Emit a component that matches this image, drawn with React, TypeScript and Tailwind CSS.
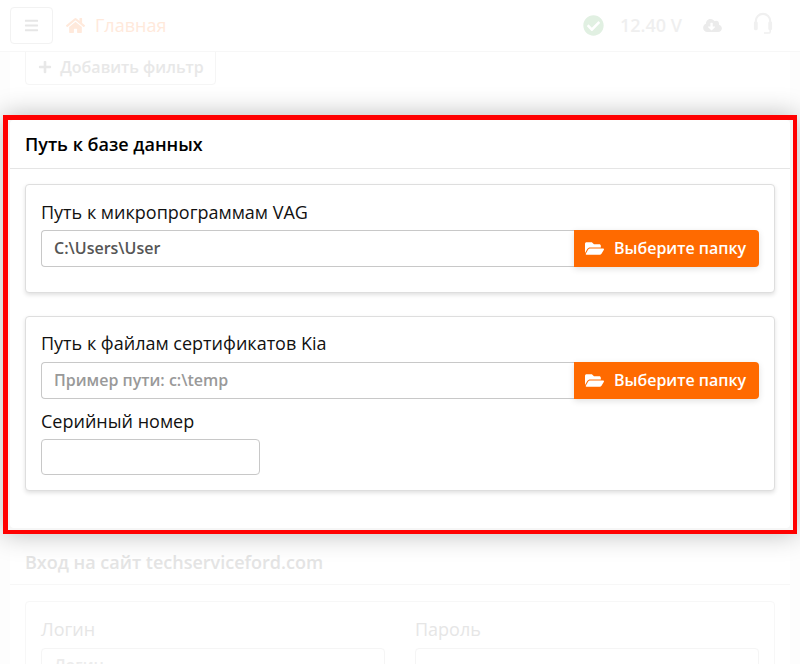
import { FaBars, FaHome, FaPlus, FaCheckCircle, FaCloudDownloadAlt, FaFolderOpen } from "react-icons/fa";

function PathRow({ value, placeholder }: { value?: string; placeholder?: string }) {
  return (
    <div className="flex h-[37px]">
      <input
        readOnly
        value={value}
        placeholder={placeholder}
        className="flex-1 min-w-0 h-full border border-[#c8c8c8] border-r-0 rounded-l-[4px] pl-3 pb-[2px] text-[16px] font-semibold text-[#555555] placeholder:text-[#999999] bg-white outline-none"
      />
      <button className="w-[185px] h-full flex items-center justify-center gap-[10px] pr-[2px] pb-[1px] bg-[#ff6a00] text-white text-[16px] font-semibold rounded-r-[4px] shadow-[0_2px_6px_rgba(0,0,0,0.12)]">
        <FaFolderOpen className="w-[19px] h-[17px]" />
        <span>Выберите папку</span>
      </button>
    </div>
  );
}

function Headset() {
  return (
    <svg viewBox="0 0 20 24" className="ml-[31px] w-[20px] h-[23px] -mt-[4px] text-[#f0f0f0]" fill="none">
      <path d="M2.5 13V9.5a7.5 7.5 0 0 1 15 0V13" stroke="currentColor" strokeWidth="2.2" />
      <rect x="0.5" y="10" width="4" height="9" rx="1.5" fill="currentColor" />
      <rect x="15.5" y="10" width="4" height="9" rx="1.5" fill="currentColor" />
      <path d="M17.5 18v2.5a1.5 1.5 0 0 1-1.5 1.5h-5" stroke="currentColor" strokeWidth="1.6" />
    </svg>
  );
}

export default function App() {
  return (
    <div className="h-[664px] w-[800px] overflow-hidden bg-[#fdfdfd] font-['Open_Sans',sans-serif]">
      <header className="relative z-10 h-[52px] bg-white border-b border-[#f7f7f7] flex items-center pl-[10px] pr-[27px]">
        <button className="w-[43px] h-[37px] -mt-[1px] border border-[#f2f2f2] rounded-[4px] flex items-center justify-center text-[#e6e6e6]">
          <FaBars className="w-[15px] h-[15px]" />
        </button>
        <FaHome className="ml-[13px] w-[19px] h-[17px] text-[#ffe9db]" />
        <span className="ml-[10px] text-[18px] text-[#ffe9db]">Главная</span>
        <div className="ml-auto flex items-center text-[#efefef]">
          <FaCheckCircle className="w-[21px] h-[21px] text-[#e1f0e2]" />
          <span className="ml-[16px] text-[18px] font-semibold">12.40 V</span>
          <FaCloudDownloadAlt className="ml-[21px] w-[19px] h-[15px] text-[#ebebeb]" />
          <Headset />
        </div>
      </header>

      <section className="mx-[10px] h-[67px] bg-white px-[15px] -mt-[4px]">
        <button className="w-[191px] h-[37px] border border-[#f5f5f5] rounded-[4px] flex items-center justify-center gap-[8px] pl-[1px] text-[16px] font-semibold text-[#e8e8e8]">
          <FaPlus className="w-[14px] h-[14px]" />
          <span>Добавить фильтр</span>
        </button>
      </section>

      <div className="relative z-20 mx-[3px] h-[419px] border-t-[5px] border-l-[5px] border-r-[4px] border-b-[4px] border-[#ff0000] bg-[#f6f6f6] pl-[2px] pr-[3px] pb-[2px] shadow-[0_0_25px_rgba(0,0,0,0.28)]">
        <div className="h-full bg-white rounded-[4px] flex flex-col">
          <div className="h-[49px] border-b border-[#e5e5e5] px-[15px] pt-[1px] flex items-center">
            <h2 className="text-[18px] font-semibold text-black">Путь к базе данных</h2>
          </div>
          <div className="px-[15px] pt-[15px] flex flex-col gap-[23px]">
            <div className="h-[109px] border border-[#dedede] rounded-[4px] bg-white px-[15px] pt-[15px] shadow-[0_2px_4px_rgba(0,0,0,0.12)]">
              <div className="h-[30px] text-[18px] leading-[24px] text-[#111111]">Путь к микропрограммам VAG</div>
              <PathRow value="C:\Users\User" />
            </div>
            <div className="h-[175px] border border-[#dedede] rounded-[4px] bg-white px-[15px] pt-[15px] shadow-[0_2px_4px_rgba(0,0,0,0.12)]">
              <div className="h-[30px] text-[18px] leading-[22px] text-[#111111]">Путь к файлам сертификатов Kia</div>
              <PathRow placeholder="Пример пути: c:\temp" />
              <div className="mt-[8px] h-[32px] text-[18px] leading-[28px] text-[#111111]">Серийный номер</div>
              <input readOnly className="block w-[219px] h-[36px] border border-[#c8c8c8] rounded-[4px] bg-white outline-none" />
            </div>
          </div>
        </div>
      </div>

      <section className="mx-[10px] mt-[6px] h-[200px] bg-white">
        <div className="h-[45px] border-b border-[#f7f7f7] px-[15px] flex items-center">
          <h2 className="text-[18px] font-semibold text-[#e4e4e4]">Вход на сайт techserviceford.com</h2>
        </div>
        <div className="mx-[15px] mt-[16px] h-[120px] border border-[#f7f7f7] rounded-[4px] px-[15px] pt-[15px] grid grid-cols-2 gap-x-[30px]">
          <div>
            <div className="text-[18px] leading-[24px] text-[#e6e6e6]">Логин</div>
            <div className="mt-[7px] h-[37px] border border-[#f5f5f5] rounded-[4px] pl-3 pt-[4px] text-[16px] font-semibold text-[#ececec]">Логин</div>
          </div>
          <div>
            <div className="text-[18px] leading-[24px] text-[#e6e6e6]">Пароль</div>
            <div className="mt-[7px] h-[37px] border border-[#f5f5f5] rounded-[4px]" />
          </div>
        </div>
      </section>
    </div>
  );
}
